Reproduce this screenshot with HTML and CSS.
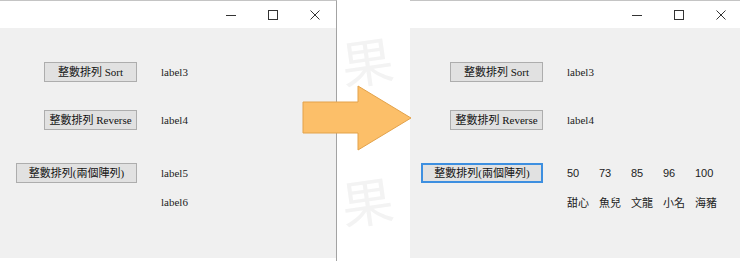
FILE: index.html
```html
<!DOCTYPE html>
<html>
<head>
<meta charset="utf-8">
<link rel="stylesheet" href="styles.css">
</head>
<body>
<div class="stage">
  <section class="win win-left">
    <div class="titlebar">
      <span class="ctl"><svg width="10" height="10" viewBox="0 0 10 10"><path d="M0 5.5H10" stroke="#333" stroke-width="1"/></svg></span>
      <span class="ctl"><svg width="10" height="10" viewBox="0 0 10 10"><rect x="0.5" y="0.5" width="9" height="9" fill="none" stroke="#333" stroke-width="1"/></svg></span>
      <span class="ctl"><svg width="10" height="10" viewBox="0 0 10 10"><path d="M0.5 0.5L9.5 9.5M9.5 0.5L0.5 9.5" stroke="#333" stroke-width="1"/></svg></span>
    </div>
    <div class="client client-left">
      <div class="row r1"><div class="cell"><button class="btn btn-sort">整數排列 Sort</button></div><span class="label">label3</span></div>
      <div class="row r2"><div class="cell"><button class="btn btn-sort">整數排列 Reverse</button></div><span class="label">label4</span></div>
      <div class="row r3"><div class="cell"><button class="btn btn-wide">整數排列(兩個陣列)</button></div><span class="label">label5</span></div>
      <div class="row r4"><div class="cell"></div><span class="label">label6</span></div>
    </div>
  </section>

  <div class="gap"></div>

  <section class="win win-right">
    <div class="titlebar">
      <span class="ctl"><svg width="10" height="10" viewBox="0 0 10 10"><path d="M0 5.5H10" stroke="#333" stroke-width="1"/></svg></span>
      <span class="ctl"><svg width="10" height="10" viewBox="0 0 10 10"><rect x="0.5" y="0.5" width="9" height="9" fill="none" stroke="#333" stroke-width="1"/></svg></span>
      <span class="ctl"><svg width="10" height="10" viewBox="0 0 10 10"><path d="M0.5 0.5L9.5 9.5M9.5 0.5L0.5 9.5" stroke="#333" stroke-width="1"/></svg></span>
    </div>
    <div class="client client-right">
      <div class="row r1"><div class="cell"><button class="btn btn-sort">整數排列 Sort</button></div><span class="label">label3</span></div>
      <div class="row r2"><div class="cell"><button class="btn btn-sort">整數排列 Reverse</button></div><span class="label">label4</span></div>
      <div class="row r3"><div class="cell"><button class="btn btn-wide focus">整數排列(兩個陣列)</button></div>
        <div class="vals"><span>50</span><span>73</span><span>85</span><span>96</span><span>100</span></div>
      </div>
      <div class="row r4"><div class="cell"></div>
        <div class="vals names"><span>甜心</span><span>魚兒</span><span>文龍</span><span>小名</span><span>海豬</span></div>
      </div>
    </div>
  </section>

  <span class="wm wm1">果</span>
  <span class="wm wm2">果</span>

  <svg class="arrow" width="112" height="67" viewBox="0 0 112 67">
    <path d="M1 17H56V1L109 33L56 65V48H1Z" fill="#fcbf69" stroke="#e3a24a" stroke-width="1"/>
  </svg>
</div>
</body>
</html>
```

FILE: styles.css
```css
html, body {
  margin: 0;
  padding: 0;
  background: #ffffff;
}
.stage {
  position: relative;
  width: 740px;
  height: 261px;
  overflow: hidden;
  display: flex;
  align-items: flex-start;
}
.win {
  flex: none;
  height: 261px;
  display: flex;
  flex-direction: column;
  box-sizing: border-box;
  border-top: 1px solid #c4c4c4;
  position: relative;
  z-index: 1;
}
.win-left {
  width: 337px;
  border-right: 1px solid #a3a3a3;
}
.gap {
  flex: none;
  width: 73px;
}
.win-right {
  width: 332px;
}
.titlebar {
  height: 27px;
  background: #ffffff;
  display: flex;
  justify-content: flex-end;
  align-items: center;
}
.ctl {
  width: 42px;
  display: flex;
  justify-content: center;
  align-items: center;
}
.client {
  height: 230px;
  background: #f0f0f0;
  display: flex;
  flex-direction: column;
  font-family: "Liberation Serif", "Noto Sans CJK TC", serif;
  font-size: 11px;
  color: #111;
}
.row {
  display: flex;
  align-items: center;
  height: 20px;
}
.r1 { margin-top: 34px; }
.r2 { margin-top: 28px; }
.r3 { margin-top: 33px; }
.r4 { margin-top: 9px; }
.cell {
  flex: none;
  display: flex;
  justify-content: flex-end;
}
.client-left .cell { width: 137px; }
.client-right .cell { width: 133px; }
.btn-sort { width: 93px; }
.btn-wide { width: 121px; }
.focus { width: 122px; }
.label {
  margin-left: 24px;
  font-family: "Liberation Serif", serif;
  font-size: 11px;
  color: #222;
}
.btn {
  flex: none;
  box-sizing: border-box;
  height: 20px;
  padding: 0;
  background: #e1e1e1;
  border: 1px solid #adadad;
  border-radius: 0;
  font-family: "Liberation Serif", "Noto Sans CJK TC", serif;
  font-size: 11px;
  color: #111;
  line-height: 16px;
  text-align: center;
  white-space: nowrap;
}
.btn.focus {
  border: 2px solid #3d8fe0;
  line-height: 14px;
}
.vals {
  margin-left: 24px;
  display: grid;
  grid-template-columns: repeat(5, 32px);
  font-family: "Liberation Sans", "Noto Sans CJK TC", sans-serif;
  font-size: 11px;
  color: #222;
}
.names {
  font-family: "Noto Sans CJK TC", sans-serif;
  font-size: 11px;
}
.wm {
  position: absolute;
  z-index: 0;
  font-family: "Noto Sans CJK TC", sans-serif;
  font-weight: 400;
  font-size: 52px;
  line-height: 1;
  color: #f3f3f3;
  transform: rotate(-8deg);
}
.wm1 { left: 341px; top: 34px; }
.wm2 { left: 341px; top: 174px; }
.arrow {
  position: absolute;
  z-index: 2;
  left: 302px;
  top: 85px;
}
```
